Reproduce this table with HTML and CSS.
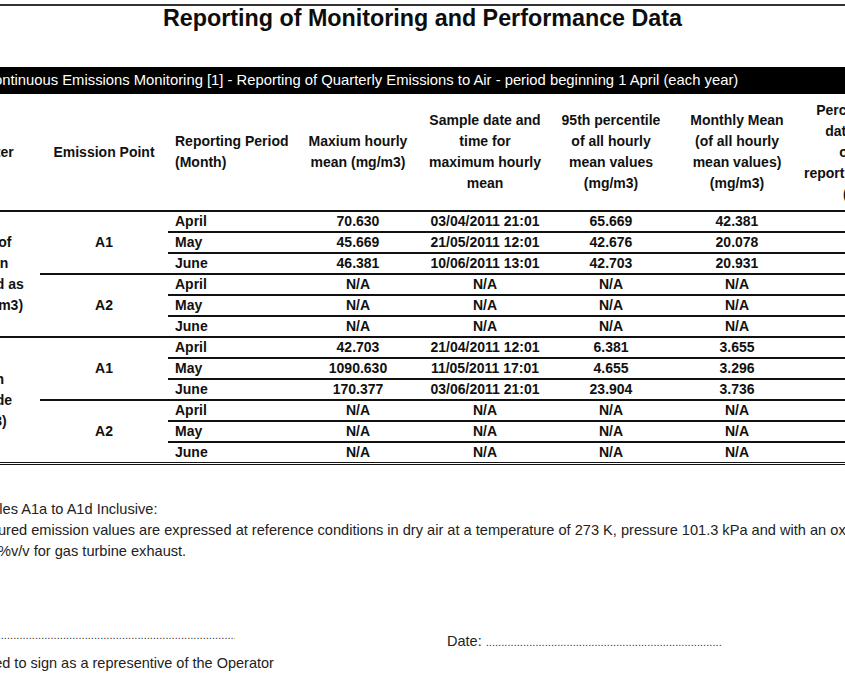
FILE: index.html
```html
<!DOCTYPE html>
<html lang="en">
<head>
<meta charset="utf-8">
<title>Reporting of Monitoring and Performance Data</title>
<link rel="stylesheet" href="styles.css">
</head>
<body>
<div class="page">
  <div class="rule"></div>
  <h1 class="title">Reporting of Monitoring and Performance Data</h1>
  <div class="bar"><span class="bar-text">Table A1c Continuous Emissions Monitoring [1] - Reporting of Quarterly Emissions to Air - period beginning 1 April (each year)</span></div>
  <table class="data">
    <colgroup>
      <col class="c-param"><col class="c-point"><col class="c-period"><col class="c-max"><col class="c-date"><col class="c-p95"><col class="c-mean"><col class="c-perc">
    </colgroup>
    <thead>
      <tr>
        <th>Parameter</th>
        <th>Emission Point</th>
        <th class="left">Reporting Period<br>(Month)</th>
        <th>Maxium hourly<br>mean (mg/m3)</th>
        <th>Sample date and<br>time for<br>maximum hourly<br>mean</th>
        <th>95th percentile<br>of all hourly<br>mean values<br>(mg/m3)</th>
        <th>Monthly Mean<br>(of all hourly<br>mean values)<br>(mg/m3)</th>
        <th>Percentage<br>data lost<br>over<br>reporting period<br>(%)</th>
      </tr>
    </thead>
    <tbody>
      <tr>
        <td rowspan="6" class="param">Oxides of<br>Nitrogen<br>expressed as<br>NO2 (mg/m3)</td>
        <td rowspan="3">A1</td>
        <td class="left">April</td><td>70.630</td><td>03/04/2011 21:01</td><td>65.669</td><td>42.381</td><td></td>
      </tr>
      <tr><td class="left">May</td><td>45.669</td><td>21/05/2011 12:01</td><td>42.676</td><td>20.078</td><td></td></tr>
      <tr><td class="left">June</td><td>46.381</td><td>10/06/2011 13:01</td><td>42.703</td><td>20.931</td><td></td></tr>
      <tr>
        <td rowspan="3">A2</td>
        <td class="left">April</td><td>N/A</td><td>N/A</td><td>N/A</td><td>N/A</td><td></td>
      </tr>
      <tr><td class="left">May</td><td>N/A</td><td>N/A</td><td>N/A</td><td>N/A</td><td></td></tr>
      <tr><td class="left">June</td><td>N/A</td><td>N/A</td><td>N/A</td><td>N/A</td><td></td></tr>
      <tr>
        <td rowspan="6" class="param">Carbon<br>Monoxide<br>(mg/m3)</td>
        <td rowspan="3">A1</td>
        <td class="left">April</td><td>42.703</td><td>21/04/2011 12:01</td><td>6.381</td><td>3.655</td><td></td>
      </tr>
      <tr><td class="left">May</td><td>1090.630</td><td>11/05/2011 17:01</td><td>4.655</td><td>3.296</td><td></td></tr>
      <tr><td class="left">June</td><td>170.377</td><td>03/06/2011 21:01</td><td>23.904</td><td>3.736</td><td></td></tr>
      <tr>
        <td rowspan="3">A2</td>
        <td class="left">April</td><td>N/A</td><td>N/A</td><td>N/A</td><td>N/A</td><td></td>
      </tr>
      <tr><td class="left">May</td><td>N/A</td><td>N/A</td><td>N/A</td><td>N/A</td><td></td></tr>
      <tr><td class="left">June</td><td>N/A</td><td>N/A</td><td>N/A</td><td>N/A</td><td></td></tr>
    </tbody>
  </table>
  <div class="notes">
    <div class="note n1">See Tables A1a to A1d Inclusive:</div>
    <div class="note n2">[1] Measured emission values are expressed at reference conditions in dry air at a temperature of 273 K, pressure 101.3 kPa and with an oxygen content of</div>
    <div class="note n3">O2 of 15%v/v for gas turbine exhaust.</div>
  </div>
  <div class="sign">
    <div class="sign-row">
      <span class="sign-field"><span class="dots">.......................................................................................................</span></span>
      <span class="date-field">Date: <span class="dots">............................................................................</span></span>
    </div>
    <div class="sign-note">Authorised to sign as a representive of the Operator</div>
  </div>
</div>
</body>
</html>
```

FILE: styles.css
```css
html, body {
  margin: 0;
  padding: 0;
  background: #fff;
}

body {
  font-family: "Liberation Sans", Arial, sans-serif;
  color: #111;
}

.page {
  width: 845px;
  height: 684px;
  overflow: hidden;
}

.rule {
  margin-top: 4px;
  border-top: 2px solid #333;
}

.title {
  margin: 0;
  font-size: 23.3px;
  line-height: 24px;
  font-weight: bold;
  text-align: center;
  color: #0d0d0d;
}

.bar {
  margin-top: 37px;
  height: 27px;
  background: #000;
  color: #fff;
  font-size: 14.8px;
  line-height: 27px;
  white-space: nowrap;
  overflow: hidden;
}

.bar-text {
  display: inline-block;
  margin-left: -85px;
}

.data {
  border-collapse: collapse;
  table-layout: fixed;
  width: 985px;
  margin-left: -81px;
  font-size: 14px;
  font-weight: bold;
  color: #111;
}

.c-param { width: 121px; }
.c-point { width: 128px; }
.c-period { width: 130px; }
.c-max { width: 120px; }
.c-date { width: 134px; }
.c-p95 { width: 118px; }
.c-mean { width: 134px; }
.c-perc { width: 100px; }

.data th {
  height: 116px;
  padding: 0;
  line-height: 21px;
  font-weight: bold;
  text-align: center;
  vertical-align: middle;
  white-space: nowrap;
}

.data td {
  height: 19px;
  padding: 0;
  line-height: 19px;
  text-align: center;
  vertical-align: middle;
  border-top: 2px solid #111;
  white-space: nowrap;
}

.data td.param {
  line-height: 21px;
}

.data .left {
  text-align: left;
  padding-left: 7px;
}

.data tbody {
  border-bottom: 3px double #111;
}

.notes {
  margin-top: 34px;
  font-size: 14.6px;
  line-height: 21px;
  color: #222;
  white-space: nowrap;
}

.n1 { margin-left: -54px; }
.n2 { margin-left: -58px; }
.n3 { margin-left: -58px; }

.sign {
  margin-top: 63px;
  font-size: 14.5px;
  line-height: 21px;
  color: #222;
  white-space: nowrap;
}

.sign-row {
  display: flex;
  align-items: baseline;
}

.sign-field {
  width: 527px;
  margin-left: -80px;
}

.sign-field .dots {
  display: inline-block;
  width: 315px;
  overflow: hidden;
  vertical-align: baseline;
}

.dots {
  font-size: 11px;
  letter-spacing: 0.05px;
  color: #333;
}

.sign-note {
  margin-left: -59px;
}
```
